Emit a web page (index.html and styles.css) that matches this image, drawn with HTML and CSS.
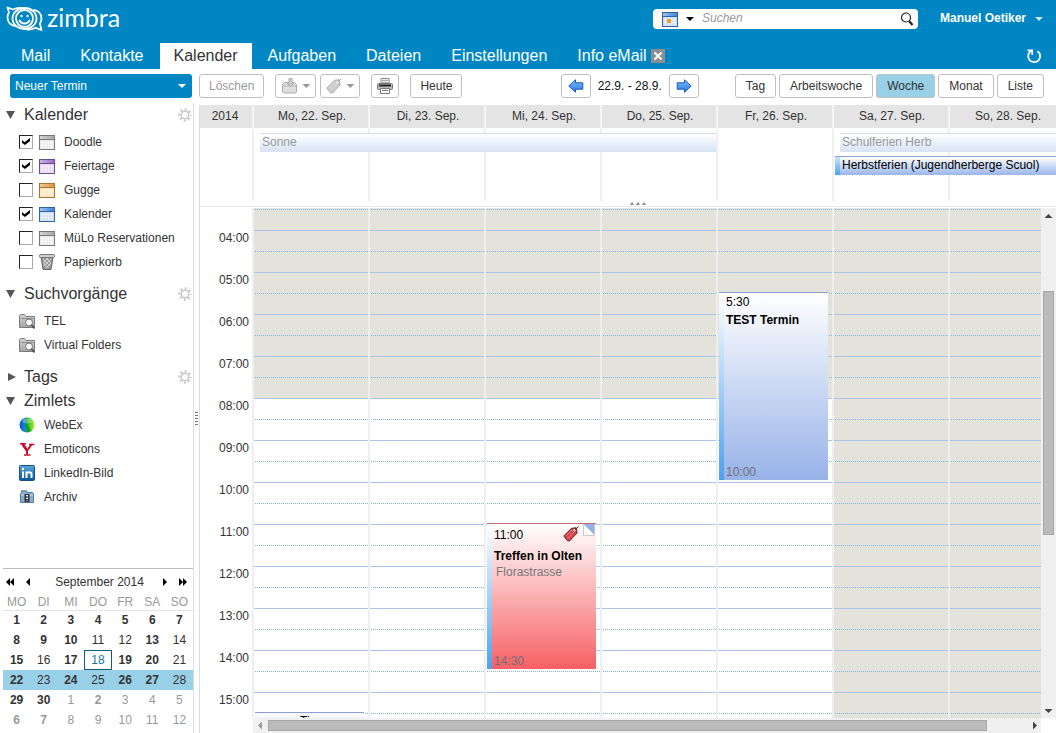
FILE: index.html
```html
<!DOCTYPE html>
<html lang="de">
<head>
<meta charset="utf-8">
<title>Zimbra: Kalender</title>
<link rel="stylesheet" href="styles.css">
</head>
<body>
<svg class="defs" aria-hidden="true">
  <defs>
    <linearGradient id="shine" x1="0" x2="1"><stop offset="0" stop-color="#fff" stop-opacity=".5"/><stop offset="1" stop-color="#fff" stop-opacity="0"/></linearGradient>
    <linearGradient id="arrowFill" x1="0" x2="0" y1="0" y2="1"><stop offset="0" stop-color="#7fbcff"/><stop offset="1" stop-color="#2a78e4"/></linearGradient>
    <linearGradient id="webex"><stop offset="0" stop-color="#0a53c4"/><stop offset=".4" stop-color="#1b8ae0"/><stop offset=".5" stop-color="#18b818"/><stop offset="1" stop-color="#a9f23c"/></linearGradient>
    <linearGradient id="link" x1="0" x2="0" y1="0" y2="1"><stop offset="0" stop-color="#5aa6dc"/><stop offset="1" stop-color="#0a5596"/></linearGradient>
    <linearGradient id="folder" x1="0" x2="0" y1="0" y2="1"><stop offset="0" stop-color="#d2d2d2"/><stop offset="1" stop-color="#a4a4a4"/></linearGradient>
  </defs>
  <symbol id="i-cal" viewBox="0 0 16 15">
    <rect x=".5" y=".5" width="15" height="14" fill="var(--pale)" stroke="var(--edge)"/>
    <rect x="1" y="1" width="14" height="3" fill="var(--tone)"/>
    <rect x="1" y="1" width="14" height="3" fill="url(#shine)"/>
    <path d="M1 4.500h14" stroke="var(--edge)"/>
    <path d="M3.500 6v8M6.500 6v8M9.500 6v8M12.500 6v8M2 7.500h12M2 10.500h12" stroke="#fff" opacity=".5"/>
  </symbol>
  <symbol id="i-gear" viewBox="0 0 14 14">
    <circle cx="7" cy="7" r="3.700" fill="none" stroke="#c9c9c9" stroke-width="1.500"/>
    <circle cx="7" cy="7" r="5.600" fill="none" stroke="#c9c9c9" stroke-width="2.200" stroke-dasharray="2.100 2.298" stroke-dashoffset="1.050"/>
  </symbol>
  <symbol id="i-search-folder" viewBox="0 0 16 15">
    <path d="M.5 13.500v-12l1-1h4l1.500 2h8.500v11z" fill="url(#folder)" stroke="#7b7b7b"/>
    <path d="M2 4.500h12" stroke="#888"/>
    <circle cx="10" cy="8.500" r="3.500" fill="#f4f4f4" stroke="#777"/><path d="M12.500 11l3 3.500" stroke="#444" stroke-width="1.500"/>
  </symbol>
  <symbol id="i-arrow" viewBox="0 0 16 14">
    <path d="M7.500 .8v3h7.300v6.400H7.500v3L.8 7z" fill="url(#arrowFill)" stroke="#1c5cb8" stroke-linejoin="round"/>
  </symbol>
  <symbol id="i-tag" viewBox="0 0 16 16">
    <path d="M.8 10L8.500 2.300l4.700-.5 1 5L6.500 15 4.500 14.800z" fill="var(--tone)" stroke="var(--edge)"/>
    <path d="M3 10l6-6M4.500 12.500l7-7" stroke="#fff" opacity=".3"/>
    <circle cx="11.500" cy="4.200" r="1.100" fill="#fff"/><path d="M12 4l3.500-3.500" stroke="var(--edge)"/>
  </symbol>
</svg>

<header class="banner">
  <div class="banner-top">
    <a class="logo" href="#">
      <svg width="38" height="26" viewBox="0 0 38 26" fill="none" stroke="#fff" stroke-width="1.800" stroke-linejoin="round" aria-hidden="true">
        <path d="M10 20C5 20 1.500 16.500 1.500 11.500c0-2 .5-3.500 1.500-5L1.500 1.500 7 3.500C10 2 14 1.500 17 2.500"/>
        <path d="M27 4c5 0 8.500 3.500 8.500 8.500 0 2-.6 3.600-1.600 5l1.600 6.500-6-2.200C26 23.500 22 24 19 23"/>
        <ellipse cx="18.500" cy="12.500" rx="12" ry="10.500"/>
        <circle cx="18.500" cy="12.500" r="8.500"/>
        <path d="M13.500 14.500c2 4 8 4 10 0" stroke-linecap="round"/>
        <circle cx="15.500" cy="10" r="1.200" fill="#fff" stroke="none"/><circle cx="21.500" cy="10" r="1.200" fill="#fff" stroke="none"/>
      </svg>
      <span>zimbra</span>
    </a>
    <form class="search">
      <button type="button" class="search-type" aria-label="Suchtyp">
        <svg class="cal blue" width="16" height="15" aria-hidden="true"><use href="#i-cal"/><rect x="5" y="7" width="4" height="4" fill="#f0a020"/></svg>
        <i class="caret"></i>
      </button>
      <input type="text" placeholder="Suchen" aria-label="Suchen">
      <button type="submit" aria-label="Suche starten">
        <svg width="14" height="15" viewBox="0 0 14 15" fill="none" stroke="#222" aria-hidden="true"><circle cx="6" cy="5.500" r="4.500" stroke-width="1.200"/><path d="M9 9l3.500 4" stroke-width="2.200"/></svg>
      </button>
    </form>
    <button type="button" class="account">Manuel Oetiker <i class="caret"></i></button>
  </div>
  <nav class="tabs">
    <a href="#">Mail</a>
    <a href="#">Kontakte</a>
    <a href="#" class="active" aria-current="page">Kalender</a>
    <a href="#">Aufgaben</a>
    <a href="#">Dateien</a>
    <a href="#">Einstellungen</a>
    <a href="#">Info eMail
      <svg width="14" height="14" viewBox="0 0 14 14" aria-hidden="true"><rect width="14" height="14" fill="#8b8f92"/><path d="M3.500 3.500l7 7M10.500 3.500l-7 7" stroke="#fff" stroke-width="2"/></svg>
    </a>
    <button type="button" class="refresh" aria-label="Aktualisieren">
      <svg width="16" height="16" viewBox="0 0 16 16" fill="none" stroke="#fff" stroke-width="1.800" aria-hidden="true"><path d="M11.500 3.200A6 6 0 1 1 5.500 2.800"/><path d="M1.500 2.300h4.700v4.700" stroke-width="1.700"/></svg>
    </button>
  </nav>
</header>

<div class="toolbar">
  <button type="button" class="btn-new">Neuer Termin <i class="caret"></i></button>
  <div class="group actions">
    <button type="button" class="btn" disabled>Löschen</button>
    <span class="pair">
      <button type="button" class="btn icon-btn" disabled aria-label="Verschieben">
        <svg width="17" height="16" viewBox="0 0 17 16" aria-hidden="true"><path d="M1.500 6.500l2-2h10l2 2v7.500l-1 1h-12l-1-1z" fill="#ddd" stroke="#aaa"/><path d="M1.500 8h14" stroke="#bbb"/><path d="M8 .5h3V5h2L9.500 8.500 6 5h2z" fill="#ccc" stroke="#aaa"/></svg>
        <i class="caret"></i>
      </button>
      <button type="button" class="btn icon-btn" disabled aria-label="Tags">
        <svg class="tag gray" width="16" height="16" aria-hidden="true"><use href="#i-tag"/></svg>
        <i class="caret"></i>
      </button>
    </span>
    <button type="button" class="btn tight" aria-label="Drucken">
      <svg width="16" height="16" viewBox="0 0 16 16" aria-hidden="true"><path d="M4 .5h8V6H4z" fill="#eee" stroke="#888"/><path d="M5 2.500h6M5 4.500h6" stroke="#aaa"/><rect x=".5" y="5.500" width="15" height="6" rx="1" fill="#bbb" stroke="#777"/><path d="M2 7.500h12" stroke="#222" stroke-width="2"/><path d="M3.500 10.500h9v5h-9z" fill="#fff" stroke="#777"/><path d="M5 12.500h6" stroke="#777"/></svg>
    </button>
    <button type="button" class="btn">Heute</button>
  </div>
  <div class="group range">
    <button type="button" class="btn tight" aria-label="Vorherige Woche"><svg width="16" height="14" aria-hidden="true"><use href="#i-arrow"/></svg></button>
    <span>22.9. - 28.9.</span>
    <button type="button" class="btn tight" aria-label="Nächste Woche"><svg class="flip" width="16" height="14" aria-hidden="true"><use href="#i-arrow"/></svg></button>
  </div>
  <div class="group views">
    <button type="button" class="btn">Tag</button>
    <button type="button" class="btn">Arbeitswoche</button>
    <button type="button" class="btn on" aria-pressed="true">Woche</button>
    <button type="button" class="btn">Monat</button>
    <button type="button" class="btn">Liste</button>
  </div>
</div>

<div class="main">
  <aside class="sidebar">
    <div class="tree">
      <h2><i class="tri open"></i>Kalender<svg class="gear" width="14" height="14" aria-hidden="true"><use href="#i-gear"/></svg></h2>
      <ul class="padded">
        <li><label><input type="checkbox" checked><svg class="cal grey" width="16" height="15" aria-hidden="true"><use href="#i-cal"/></svg>Doodle</label></li>
        <li><label><input type="checkbox" checked><svg class="cal purple" width="16" height="15" aria-hidden="true"><use href="#i-cal"/></svg>Feiertage</label></li>
        <li><label><input type="checkbox"><svg class="cal orange" width="16" height="15" aria-hidden="true"><use href="#i-cal"/></svg>Gugge</label></li>
        <li><label><input type="checkbox" checked><svg class="cal blue" width="16" height="15" aria-hidden="true"><use href="#i-cal"/></svg>Kalender</label></li>
        <li><label><input type="checkbox"><svg class="cal grey" width="16" height="15" aria-hidden="true"><use href="#i-cal"/></svg>MüLo Reservationen</label></li>
        <li><label><input type="checkbox"><svg width="16" height="16" viewBox="0 0 16 16" aria-hidden="true"><path d="M2 3h12l-2 12.500H4z" fill="#999" stroke="#666"/><path d="M4 5l7 7M7 4l5 5M4.500 9l5 5M12 5l-7 7M9 4L4 9M12 9l-5 5" stroke="#ddd" stroke-width=".8"/><rect x=".5" y=".5" width="15" height="3" rx="1" fill="#ccc" stroke="#777"/></svg>Papierkorb</label></li>
      </ul>
      <h2><i class="tri open"></i>Suchvorgänge<svg class="gear" width="14" height="14" aria-hidden="true"><use href="#i-gear"/></svg></h2>
      <ul class="padded">
        <li><a href="#"><svg width="16" height="15" aria-hidden="true"><use href="#i-search-folder"/></svg>TEL</a></li>
        <li><a href="#"><svg width="16" height="15" aria-hidden="true"><use href="#i-search-folder"/></svg>Virtual Folders</a></li>
      </ul>
      <h2><i class="tri"></i>Tags<svg class="gear" width="14" height="14" aria-hidden="true"><use href="#i-gear"/></svg></h2>
      <h2><i class="tri open"></i>Zimlets</h2>
      <ul>
        <li><a href="#"><svg width="16" height="16" viewBox="0 0 16 16" aria-hidden="true"><circle cx="8" cy="8" r="7.500" fill="url(#webex)"/><path d="M8 .5c-3 4-2 11 1 15a7.500 7.500 0 0 0 4-2C9 11 8 5 8 .5z" fill="#0b8a2a" opacity=".6"/><ellipse cx="8" cy="4" rx="4.500" ry="2.500" fill="#fff" opacity=".3"/></svg>WebEx</a></li>
        <li><a href="#"><svg width="16" height="16" viewBox="0 0 16 16" fill="none" stroke="#c8102e" aria-hidden="true"><path d="M3.500 3l4.500 6.500" stroke-width="2.800"/><path d="M8 9v4.500M12.500 3.500L8.500 9" stroke-width="2"/><path d="M1 2.800h6M10 3.500h5.500M5 14h6.500" stroke-width="1.400"/></svg>Emoticons</a></li>
        <li><a href="#"><svg width="16" height="16" viewBox="0 0 16 16" aria-hidden="true"><rect x=".5" y=".5" width="15" height="15" rx="1" fill="url(#link)" stroke="#174f88"/><path d="M4 6.500V13M7.500 6.500V13M7.500 9.500c0-3 5-3 5 0V13" fill="none" stroke="#fff" stroke-width="2"/><circle cx="4" cy="4" r="1.200" fill="#fff"/></svg>LinkedIn-Bild</a></li>
        <li><a href="#"><svg width="16" height="14" viewBox="0 0 16 14" aria-hidden="true"><path d="M1.500 12.500v-9l1-1V.8h5l1 1.700h5l1 1v9z" fill="#86acd0" stroke="#56789a"/><path d="M2 5h12" stroke="#c9def0"/><rect x="5.500" y="4" width="5" height="8" fill="#333"/><path d="M7 5.500h2M7.500 7h1.500M7 8.500h2M7.500 10.500h1" stroke="#eee"/></svg>Archiv</a></li>
      </ul>
    </div>
    <section class="mini">
      <div class="mini-nav">
        <button type="button" aria-label="Voriges Jahr"><i class="step left"></i><i class="step left"></i></button>
        <button type="button" aria-label="Voriger Monat"><i class="step left"></i></button>
        <span>September 2014</span>
        <button type="button" aria-label="Nächster Monat"><i class="step right"></i></button>
        <button type="button" aria-label="Nächstes Jahr"><i class="step right"></i><i class="step right"></i></button>
      </div>
      <table>
        <thead><tr><th>MO</th><th>DI</th><th>MI</th><th>DO</th><th>FR</th><th>SA</th><th>SO</th></tr></thead>
        <tbody>
          <tr><td><b>1</b></td><td><b>2</b></td><td><b>3</b></td><td><b>4</b></td><td><b>5</b></td><td><b>6</b></td><td><b>7</b></td></tr>
          <tr><td><b>8</b></td><td><b>9</b></td><td><b>10</b></td><td>11</td><td>12</td><td><b>13</b></td><td>14</td></tr>
          <tr><td><b>15</b></td><td>16</td><td><b>17</b></td><td class="today">18</td><td><b>19</b></td><td><b>20</b></td><td>21</td></tr>
          <tr class="current"><td><b>22</b></td><td>23</td><td><b>24</b></td><td>25</td><td><b>26</b></td><td><b>27</b></td><td>28</td></tr>
          <tr><td><b>29</b></td><td><b>30</b></td><td class="out">1</td><td class="out"><b>2</b></td><td class="out">3</td><td class="out">4</td><td class="out">5</td></tr>
          <tr><td class="out"><b>6</b></td><td class="out"><b>7</b></td><td class="out">8</td><td class="out">9</td><td class="out">10</td><td class="out">11</td><td class="out">12</td></tr>
        </tbody>
      </table>
    </section>
  </aside>
  <div class="sash"><i></i></div>

  <main class="week">
    <div class="week-row head">
      <div class="year">2014</div>
      <div class="days">
        <div>Mo, 22. Sep.</div><div>Di, 23. Sep.</div><div>Mi, 24. Sep.</div><div>Do, 25. Sep.</div><div>Fr, 26. Sep.</div><div>Sa, 27. Sep.</div><div>So, 28. Sep.</div>
      </div>
    </div>
    <div class="week-row allday">
      <div class="gutter"></div>
      <div class="days">
        <i class="lane"></i><i class="lane"></i><i class="lane"></i><i class="lane"></i><i class="lane"></i><i class="lane"></i><i class="lane"></i>
        <div class="bar faded sonne">Sonne</div>
        <div class="bar faded schul">Schulferien Herb</div>
        <div class="bar herbst">Herbstferien (Jugendherberge Scuol)</div>
      </div>
    </div>
    <div class="grip"><i></i><i></i><i></i></div>
    <div class="body">
      <ol class="hours">
        <li>04:00</li><li>05:00</li><li>06:00</li><li>07:00</li><li>08:00</li><li>09:00</li><li>10:00</li><li>11:00</li><li>12:00</li><li>13:00</li><li>14:00</li><li>15:00</li>
      </ol>
      <div class="days grid">
        <div class="day">
          <article class="event blue-event cut"><strong>Ti</strong></article>
        </div>
        <div class="day"></div>
        <div class="day">
          <article class="event red-event olten">
            <div class="event-top"><time>11:00</time><svg class="tag red" width="16" height="16" aria-hidden="true"><use href="#i-tag"/></svg><i class="corner"></i></div>
            <strong>Treffen in Olten</strong>
            <span class="place">Florastrasse</span>
            <time class="end">14:30</time>
          </article>
        </div>
        <div class="day"></div>
        <div class="day">
          <article class="event blue-event test">
            <time>5:30</time>
            <strong>TEST Termin</strong>
            <time class="end">10:00</time>
          </article>
        </div>
        <div class="day weekend"></div>
        <div class="day weekend"></div>
      </div>
      <div class="scroll-y"><i class="arrow up"></i><div class="track"><i class="thumb"></i></div><i class="arrow down"></i></div>
      <div class="scroll-x"><i class="arrow prev"></i><div class="track"><i class="thumb"></i></div><i class="arrow next"></i></div>
    </div>
  </main>
</div>
</body>
</html>
```
FILE: styles.css
```css
* { box-sizing: border-box; }
body {
  margin: 0;
  height: 100vh;
  display: flex;
  flex-direction: column;
  overflow: hidden;
  background: #fff;
  color: #333;
  font: 12px/16px "Liberation Sans", Arial, sans-serif;
}
button, input { font: inherit; color: inherit; margin: 0; }
button { border: 0; background: none; padding: 0; }
a { color: inherit; text-decoration: none; }
ul, ol { list-style: none; margin: 0; padding: 0; }
svg { flex: none; display: block; }
.defs { position: absolute; width: 0; height: 0; }
.caret {
  flex: none;
  width: 8px;
  height: 4px;
  background: currentColor;
  clip-path: polygon(0 0, 100% 0, 50% 100%);
}

/* icon tones */
.cal.grey { --tone: #a9a9a9; --edge: #777; --pale: #ececec; }
.cal.purple { --tone: #9a6cc8; --edge: #6d4a92; --pale: #ead8f4; }
.cal.orange { --tone: #e0923a; --edge: #a8752c; --pale: #fbe6bd; }
.cal.blue { --tone: #3f86dc; --edge: #2f63a8; --pale: #cfe2f8; }
.tag.gray { --tone: #ccc; --edge: #aaa; }
.tag.red { --tone: #d8434c; --edge: #6a1c20; }

/* banner */
.banner { background: #0087c3; color: #fff; flex: none; }
.banner-top { display: flex; align-items: center; height: 43px; padding: 0 13px 0 6px; }
.logo { display: flex; align-items: flex-start; gap: 3px; margin-bottom: 5px; font: 25px/22px Lato, sans-serif; }
.search {
  display: flex;
  align-items: center;
  width: 265px;
  height: 20px;
  margin: 0 22px 5px auto;
  padding: 0 4px 0 9px;
  background: #fff;
  border-radius: 4px;
  color: #000;
}
.search-type { display: flex; align-items: center; gap: 8px; }
.search input { flex: 1; min-width: 0; border: 0; padding: 0 8px 2px; background: none; outline: 0; }
.search input::placeholder { color: #999; font-style: italic; opacity: 1; }
.account { display: flex; align-items: center; gap: 9px; margin-bottom: 8px; font-weight: bold; }
.account .caret { margin-top: 3px; color: #cfe9f5; }
.tabs { display: flex; gap: 2px; padding: 0 14px 0 7px; font-size: 16px; line-height: 26px; }
.tabs a { display: flex; align-items: center; gap: 4px; padding: 0 14px; }
.tabs .active { background: #fff; color: #333; }
.refresh { margin-left: auto; }

/* toolbar */
.toolbar { display: flex; flex: none; height: 34px; padding: 5px 12px 5px 10px; align-items: center; }
.btn-new {
  display: flex;
  align-items: center;
  justify-content: space-between;
  width: 182px;
  height: 24px;
  padding: 0 6px 0 5px;
  background: #0087c3;
  color: #fff;
  border-radius: 3px;
}
.group { display: flex; align-items: center; }
.btn {
  display: flex;
  align-items: center;
  justify-content: center;
  gap: 4px;
  height: 24px;
  padding: 0 9px;
  border: 1px solid #bfbfbf;
  border-radius: 3px;
  background: #fff;
}
.btn:disabled { color: #999; }
.btn.on { background: #98d0e8; }
.icon-btn, .tight { padding: 0 5px; }
.actions { margin-left: 7px; gap: 11px; }
.pair { display: flex; gap: 4px; }
.range { margin: 0 36px 0 auto; gap: 7px; color: #111; }
.range .tight { padding: 0 6px; }
.flip { transform: scaleX(-1); }
.views { gap: 3px; }
.views .btn { padding: 0 10px; }

/* sidebar */
.main { display: flex; flex: 1; min-height: 0; }
.sidebar { display: flex; flex-direction: column; flex: none; width: 194px; border-right: 1px solid #ddd; }
.tree { flex: 1; min-height: 0; }
.tree h2 {
  display: flex;
  align-items: center;
  gap: 8px;
  height: 24px;
  margin: 0;
  padding: 0 1px 0 6px;
  font-size: 16px;
  font-weight: normal;
}
.gear { margin-left: auto; }
.tri { width: 10px; height: 8px; background: #555; clip-path: polygon(20% 0, 100% 50%, 20% 100%); }
.tri.open { clip-path: polygon(0 0, 90% 0, 45% 100%); }
.padded { padding: 3px 0 8px; }
.tree li, .tree li label, .tree li a { display: flex; align-items: center; height: 24px; }
.tree li { padding-left: 19px; }
.tree li a { gap: 9px; }
.tree label svg { margin: 0 9px 0 6px; }
.tree input {
  appearance: none;
  width: 14px;
  height: 14px;
  border: 1px solid #222;
  border-right-color: #aaa;
  border-bottom-color: #aaa;
  background: #fff;
}
.tree input:checked::before {
  content: "";
  display: block;
  width: 8px;
  height: 7px;
  margin: 2px;
  background: #000;
  clip-path: polygon(0 28%, 32% 60%, 100% 0, 100% 42%, 38% 100%, 0 68%);
}

.mini { flex: none; margin: 0 0 3px 3px; border-top: 1px solid #bbb; }
.mini-nav { display: flex; align-items: center; height: 25px; padding: 2px 6px 0 3px; }
.mini-nav span { flex: 1; padding-left: 6px; text-align: center; white-space: nowrap; }
.mini-nav button { display: flex; width: 20px; height: 16px; align-items: center; }
.mini-nav button:nth-of-type(n+3) { justify-content: flex-end; }
.step { width: 4px; height: 8px; background: #000; }
.step.left { clip-path: polygon(100% 0, 100% 100%, 0 50%); }
.step.right { clip-path: polygon(0 0, 100% 50%, 0 100%); }
.mini table { width: 100%; table-layout: fixed; border-collapse: collapse; text-align: center; }
.mini th { height: 16px; padding: 0; line-height: 16px; font-weight: normal; color: #999; border-bottom: 1px solid #e6e6e6; }
.mini td { height: 20px; padding: 0; }
.mini .current { background: #98d0e8; }
.mini .today { color: #1a73a5; outline: 1px solid #0b6080; outline-offset: -1px; }
.mini .out { color: #999; }

.sash { display: flex; flex: none; align-items: center; justify-content: center; width: 6px; margin-top: 2px; border-right: 1px solid #ddd; }
.sash i { width: 3px; height: 14px; background: repeating-linear-gradient(#777 0 1px, #fff 1px 3px); }

/* week view */
.week { display: flex; flex-direction: column; flex: 1; min-width: 0; padding-top: 2px; }
.week-row { display: grid; grid-template-columns: 54px minmax(0, 1fr); flex: none; }
.days { display: grid; grid-template-columns: repeat(7, minmax(116px, 1fr)); overflow: hidden; }
.head { background: #e4e4e4; line-height: 23px; text-align: center; }
.head .year { padding-right: 2px; border-right: 2px solid #f4f4f4; }
.head .days > div { padding-left: 2px; border-right: 2px solid #f4f4f4; }
.allday { height: 73px; }
.gutter { border-right: 2px solid #efefef; margin-top: 1px; }
.allday .days { grid-template-rows: 5px 19px 4px 19px 1fr; }
.lane { grid-row: 1 / -1; border-right: 2px solid #efefef; margin-top: 1px; }
.lane:nth-child(1) { grid-column: 1; }
.lane:nth-child(2) { grid-column: 2; }
.lane:nth-child(3) { grid-column: 3; }
.lane:nth-child(4) { grid-column: 4; }
.lane:nth-child(5) { grid-column: 5; }
.lane:nth-child(6) { grid-column: 6; }
.lane:nth-child(7) { grid-column: 7; }
.bar {
  padding: 0 2px;
  border-top: 1px solid #8ba2d8;
  background: linear-gradient(#fff, #9ab4ea);
  color: #000;
  line-height: 17px;
  white-space: nowrap;
}
.bar.faded { border-color: #d3dcef; background: linear-gradient(#fff, #d6e2f5); color: #999; }
.sonne { grid-area: 2 / 1 / 3 / 5; margin: 0 2px 0 6px; }
.schul { grid-area: 2 / 6 / 3 / 8; margin-left: 6px; }
.herbst {
  grid-area: 4 / 6 / 5 / 8;
  margin-left: 1px;
  padding-left: 7px;
  background: linear-gradient(#c4e6fb, #4ba2f0) 0 0 / 5px 100% no-repeat, linear-gradient(#fff, #9ab4ea);
}
.grip { display: flex; flex: none; justify-content: center; gap: 2px; height: 6px; padding: 1px 0 0 20px; border-bottom: 1px solid #e8e8e8; }
.grip i { width: 4px; height: 3px; background: #888; clip-path: polygon(50% 0, 100% 100%, 0 100%); }

.body {
  display: grid;
  grid-template-columns: 54px minmax(0, 1fr) 15px;
  grid-template-rows: minmax(0, 1fr) 15px;
  flex: 1;
  min-height: 0;
  padding-top: 1px;
}
.hours { overflow: hidden; padding-top: 22px; border-right: 2px solid #efefef; text-align: right; }
.hours li { height: 42px; padding-right: 3px; }
.day {
  position: relative;
  border-right: 2px solid #efefef;
  background:
    linear-gradient(to top, #a9c6ea 1px, transparent 1px) 0 23px / 100% 42px,
    conic-gradient(from 90deg at 1px 41px, #84b6da 90deg, transparent 0) 0 2px / 2px 42px,
    linear-gradient(#e3e3dc 190px, #fff 190px);
}
.day.weekend {
  background:
    linear-gradient(to top, #a9c6ea 1px, transparent 1px) 0 23px / 100% 42px,
    conic-gradient(from 90deg at 1px 41px, #84b6da 90deg, transparent 0) 0 2px / 2px 42px,
    #e3e3dc;
}
.event {
  position: absolute;
  left: 1px;
  right: 4px;
  display: flex;
  flex-direction: column;
  padding-left: 7px;
  color: #000;
}
.event::before {
  content: "";
  position: absolute;
  left: 0;
  top: 0;
  bottom: 0;
  width: 5px;
  background: linear-gradient(#fff, #4ba2f0);
}
.blue-event { border-top: 1px solid #8ba0d4; background: linear-gradient(#fff, #98b2e8); }
.red-event { border-top: 1px solid #c46c74; background: linear-gradient(#fff, #f66064); }
.test { top: 84px; height: 188px; padding-top: 1px; gap: 2px; }
.olten { top: 315px; height: 146px; }
.cut { top: 504px; height: 40px; padding: 0 0 0 45px; }
.cut strong { font-weight: normal; }
.event .end { margin-top: auto; color: #6f6f78; }
.event-top { display: flex; align-items: flex-start; height: 24px; }
.event-top time { margin: 3px auto 0 0; }
.event-top .tag { margin: 2px 4px 0 0; }
.corner { width: 12px; height: 12px; margin-right: 1px; border: 1px solid #ccc; border-top: 0; background: linear-gradient(45deg, #fff 50%, #94b1e6 50%); }
.place { padding-left: 2px; color: #777; }

/* scrollbars */
.scroll-y, .scroll-x { display: flex; align-items: center; background: #f0f0f0; }
.scroll-y { flex-direction: column; padding: 6px 0 5px; }
.scroll-x { grid-column: 2; margin-left: -1px; padding: 0 4px 0 5px; }
.track { flex: 1; }
.thumb { display: block; background: #bbb; border: 1px solid #a6a6a6; }
.scroll-y .track { width: 11px; padding-top: 73px; }
.scroll-y .thumb { height: 244px; }
.scroll-x .track { padding-left: 6px; }
.scroll-x .thumb { width: 94%; height: 11px; }
.arrow { flex: none; width: 8px; height: 4px; background: #444; }
.up { clip-path: polygon(50% 0, 100% 100%, 0 100%); }
.down { clip-path: polygon(0 0, 100% 0, 50% 100%); }
.prev, .next { width: 4px; height: 8px; }
.prev { background: #999; clip-path: polygon(100% 0, 100% 100%, 0 50%); }
.next { clip-path: polygon(0 0, 100% 50%, 0 100%); }
```
